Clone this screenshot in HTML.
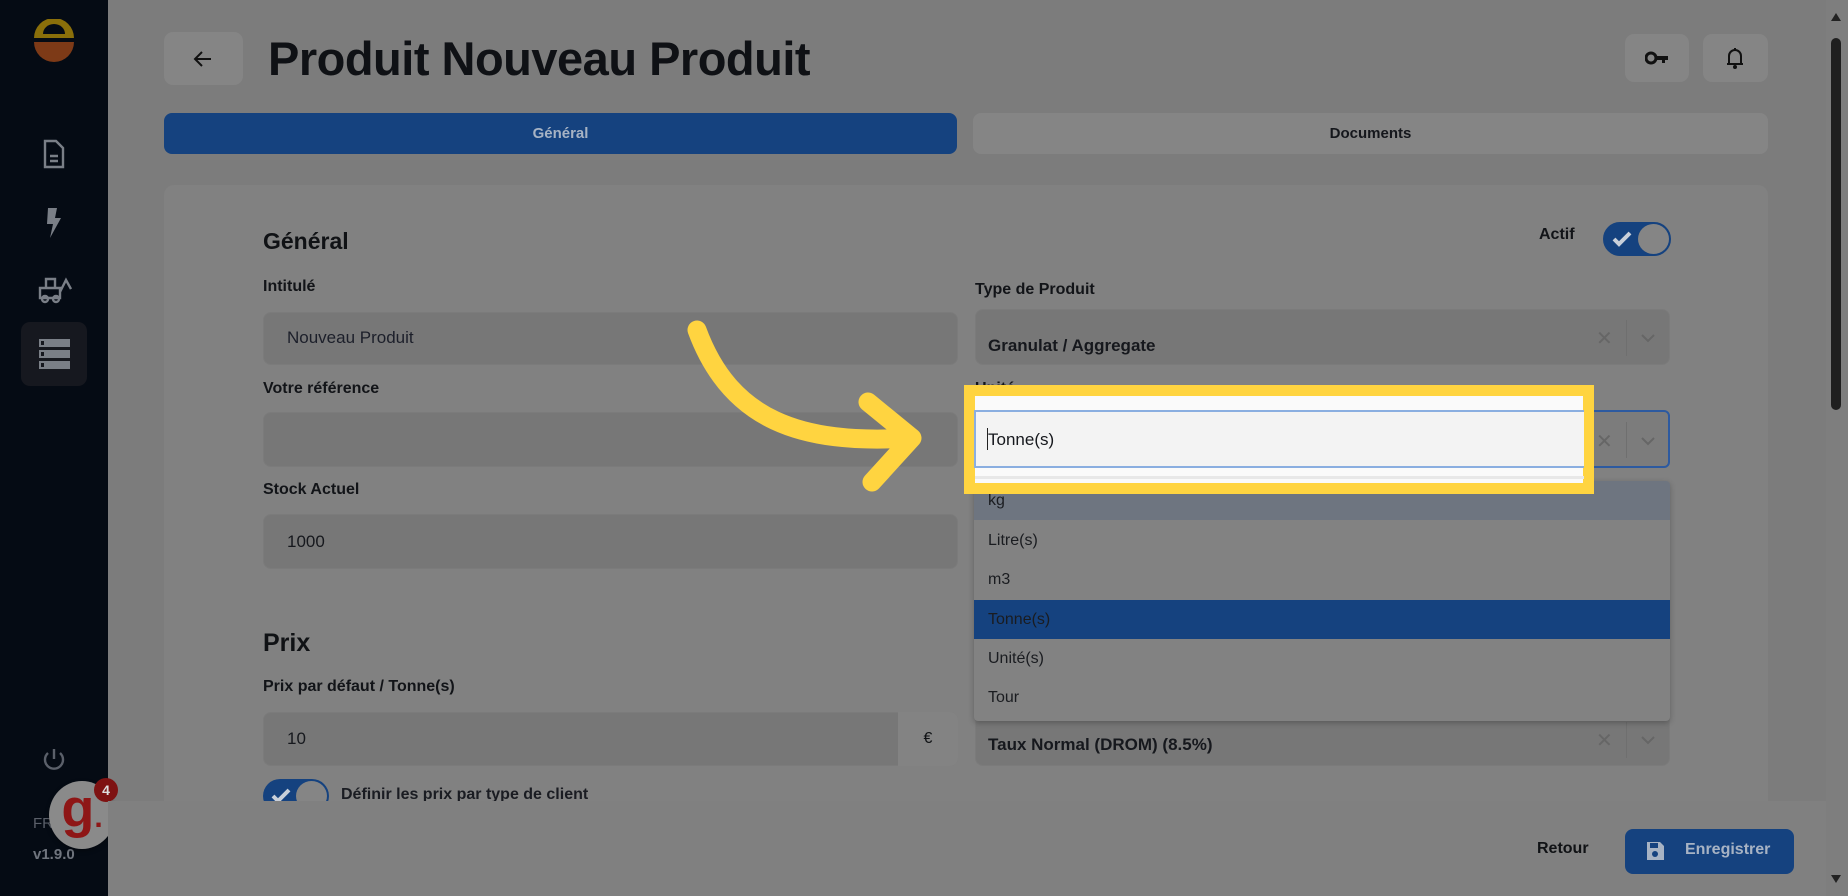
<!DOCTYPE html>
<html><head><meta charset="utf-8"><style>
*{box-sizing:border-box;margin:0;padding:0}
body{width:1848px;height:896px;overflow:hidden;background:#7c7c7c;font-family:"Liberation Sans",Arial,sans-serif;color:#101215;position:relative}
.abs{position:absolute}
.side{left:0;top:0;width:108px;height:896px;background:#050b14}
.btn{background:#858585;border-radius:9px}
.lbl{font-size:16px;font-weight:700;color:#121418}
.inp{background:#777;border:1px solid #7b7b7b;border-radius:8px}
.txt{font-size:17px;color:#16181d}
.item{position:absolute;left:0;width:696px;height:39px;font-size:16px;color:#1a1c20;padding-left:14px;line-height:39px}
</style></head><body>
<div class="abs side"></div>
<svg class="abs" style="left:31px;top:19px" width="46" height="46" viewBox="0 0 46 46"><path d="M3 19 A20 20 0 0 1 43 19 Z" fill="#8a6f0a"/><path d="M12 15 A11 10 0 0 1 34 15 Z" fill="#050b14"/><path d="M3 23 H43 A20 20 0 0 1 3 23 Z" fill="#7d3a17"/></svg>
<svg class="abs" style="left:42px;top:139px" width="24" height="30" viewBox="0 0 24 30" fill="none" stroke="#7a7f87" stroke-width="2.4"><path d="M3 2h11l7 7v19H3z"/><path d="M8 17h8M8 22h8"/></svg>
<svg class="abs" style="left:44px;top:208px" width="18" height="30" viewBox="0 0 18 30"><path d="M4 0h9l-2 10h6L6 30l3-14H3z" fill="#7a7f87"/></svg>
<svg class="abs" style="left:38px;top:276px" width="34" height="28" viewBox="0 0 34 28" fill="none" stroke="#7a7f87" stroke-width="2.4"><path d="M2 12h20v10H2zM8 12V3h9v9M22 16l6-12 5 9"/><circle cx="7" cy="23" r="3"/><circle cx="18" cy="23" r="3"/></svg>
<div class="abs" style="left:21px;top:322px;width:66px;height:64px;background:#16181f;border-radius:9px"></div>
<svg class="abs" style="left:39px;top:339px" width="31" height="30" viewBox="0 0 31 30" fill="#7a7f87"><rect x="0" y="0" width="31" height="8"/><rect x="0" y="11" width="31" height="8"/><rect x="0" y="22" width="31" height="8"/><rect x="2" y="2" width="3" height="4" fill="#16181f"/><rect x="2" y="13" width="3" height="4" fill="#16181f"/><rect x="2" y="24" width="3" height="4" fill="#16181f"/></svg>
<svg class="abs" style="left:42px;top:747px" width="24" height="26" viewBox="0 0 24 26" fill="none" stroke="#5b606a" stroke-width="2.4"><path d="M12 2v10"/><path d="M6 6A9 9 0 1 0 18 6"/></svg>
<div class="abs" style="left:33px;top:815px;font-size:15px;color:#5b606a">FR</div>
<div class="abs" style="left:33px;top:846px;font-size:15px;color:#70757e;font-weight:700">v1.9.0</div>
<div class="abs" style="left:49px;top:781px;width:66px;height:68px;border-radius:50%;background:#8a8a8a;box-shadow:0 2px 5px rgba(0,0,0,.3);text-align:center;font-size:54px;line-height:56px;color:#8e1616;font-weight:700">g<span style="font-size:30px">.</span></div>
<div class="abs" style="left:94px;top:778px;width:24px;height:24px;border-radius:50%;background:#7e1212;color:#ddd;font-size:14px;font-weight:700;text-align:center;line-height:24px">4</div>

<div class="abs btn" style="left:164px;top:32px;width:79px;height:53px"></div>
<svg class="abs" style="left:193px;top:49px" width="20" height="20" viewBox="0 0 20 20" fill="none" stroke="#111" stroke-width="2"><path d="M18 10H3M9 3l-7 7 7 7"/></svg>
<div class="abs" style="left:268px;top:31px;font-size:47px;font-weight:700;color:#0f1115;letter-spacing:-0.5px">Produit Nouveau Produit</div>
<div class="abs btn" style="left:1625px;top:34px;width:64px;height:48px"></div>
<svg class="abs" style="left:1645px;top:50px" width="24" height="16" viewBox="0 0 24 16"><circle cx="6" cy="8" r="5" fill="none" stroke="#111" stroke-width="3"/><path d="M11 6h12v4h-3v3h-3v-3h-6z" fill="#111"/></svg>
<div class="abs btn" style="left:1703px;top:34px;width:65px;height:48px"></div>
<svg class="abs" style="left:1725px;top:46px" width="20" height="24" viewBox="0 0 20 24" fill="none" stroke="#111" stroke-width="2"><path d="M4 18V10a6 6 0 0 1 12 0v8H4zM2 18h16M10 2v2"/><circle cx="10" cy="21" r="1" fill="#111"/></svg>

<div class="abs" style="left:164px;top:113px;width:793px;height:41px;background:#15427f;border-radius:8px;text-align:center;line-height:41px;font-size:15px;font-weight:700;color:#a7b3c4">Général</div>
<div class="abs" style="left:973px;top:113px;width:795px;height:41px;background:#858585;border-radius:8px;text-align:center;line-height:41px;font-size:15px;font-weight:700;color:#15171c">Documents</div>

<div class="abs" style="left:164px;top:185px;width:1604px;height:616px;background:#818181;border-radius:10px 10px 0 0"></div>
<div class="abs" style="left:263px;top:228px;font-size:23px;font-weight:700">Général</div>
<div class="abs lbl" style="left:1539px;top:226px">Actif</div>
<div class="abs" style="left:1603px;top:222px;width:68px;height:34px;border-radius:17px;background:#15427f;border:2px solid #15427f"></div>
<div class="abs" style="left:1638px;top:224px;width:31px;height:30px;border-radius:50%;background:#858585"></div>
<svg class="abs" style="left:1612px;top:230px" width="20" height="18" viewBox="0 0 20 18" fill="none" stroke="#c9d0da" stroke-width="4"><path d="M2 9l5 5 11-11"/></svg>

<div class="abs lbl" style="left:263px;top:278px">Intitulé</div>
<div class="abs inp" style="left:263px;top:312px;width:695px;height:53px"></div>
<div class="abs txt" style="left:287px;top:328px;color:#1c1f2a">Nouveau Produit</div>
<div class="abs lbl" style="left:975px;top:281px">Type de Produit</div>
<div class="abs inp" style="left:975px;top:309px;width:695px;height:56px"></div>
<div class="abs txt" style="left:988px;top:336px;font-weight:700">Granulat / Aggregate</div>
<div class="abs" style="left:1596px;top:326px;font-size:20px;color:#666">✕</div>
<div class="abs" style="left:1626px;top:320px;width:1px;height:36px;background:#6f6f6f"></div>
<svg class="abs" style="left:1640px;top:333px" width="16" height="10" viewBox="0 0 16 10" fill="none" stroke="#666" stroke-width="2"><path d="M2 2l6 6 6-6"/></svg>

<div class="abs lbl" style="left:263px;top:380px">Votre référence</div>
<div class="abs inp" style="left:263px;top:412px;width:695px;height:55px"></div>
<div class="abs lbl" style="left:975px;top:380px">Unité</div>
<div class="abs" style="left:975px;top:410px;width:695px;height:58px;background:#7c7c7c;border:2px solid #2d5aa0;border-radius:6px"></div>
<div class="abs" style="left:1596px;top:429px;font-size:20px;color:#666">✕</div>
<div class="abs" style="left:1626px;top:422px;width:1px;height:36px;background:#6f6f6f"></div>
<svg class="abs" style="left:1640px;top:436px" width="16" height="10" viewBox="0 0 16 10" fill="none" stroke="#666" stroke-width="2"><path d="M2 2l6 6 6-6"/></svg>

<div class="abs lbl" style="left:263px;top:481px">Stock Actuel</div>
<div class="abs inp" style="left:263px;top:514px;width:695px;height:55px"></div>
<div class="abs txt" style="left:287px;top:532px">1000</div>

<div class="abs" style="left:263px;top:629px;font-size:25px;font-weight:700">Prix</div>
<div class="abs lbl" style="left:263px;top:678px">Prix par défaut / Tonne(s)</div>
<div class="abs inp" style="left:263px;top:712px;width:695px;height:54px"></div>
<div class="abs" style="left:898px;top:712px;width:60px;height:54px;background:#838383;border-radius:0 8px 8px 0;text-align:center;line-height:54px;font-size:16px">€</div>
<div class="abs txt" style="left:287px;top:729px">10</div>
<div class="abs inp" style="left:975px;top:712px;width:695px;height:54px"></div>
<div class="abs txt" style="left:988px;top:735px;font-weight:700">Taux Normal (DROM) (8.5%)</div>
<div class="abs" style="left:1596px;top:728px;font-size:20px;color:#666">✕</div>
<div class="abs" style="left:1626px;top:722px;width:1px;height:36px;background:#6f6f6f"></div>
<svg class="abs" style="left:1640px;top:735px" width="16" height="10" viewBox="0 0 16 10" fill="none" stroke="#666" stroke-width="2"><path d="M2 2l6 6 6-6"/></svg>

<div class="abs" style="left:263px;top:779px;width:66px;height:34px;border-radius:17px;background:#15427f"></div>
<div class="abs" style="left:296px;top:781px;width:31px;height:30px;border-radius:50%;background:#858585"></div>
<svg class="abs" style="left:271px;top:787px" width="20" height="18" viewBox="0 0 20 18" fill="none" stroke="#c9d0da" stroke-width="4"><path d="M2 9l5 5 11-11"/></svg>
<div class="abs" style="left:341px;top:786px;font-size:16px;font-weight:700;color:#1a1c22">Définir les prix par type de client</div>
<div class="abs" style="left:108px;top:801px;width:1718px;height:95px;background:#808080"></div>

<div class="abs" style="left:974px;top:481px;width:696px;height:240px;background:#828282;border-radius:4px;box-shadow:0 2px 6px rgba(0,0,0,.25);overflow:hidden">
<div class="item" style="top:0;background:#6e7580">kg</div>
<div class="item" style="top:40px">Litre(s)</div>
<div class="item" style="top:79px">m3</div>
<div class="item" style="top:119px;background:#15427f">Tonne(s)</div>
<div class="item" style="top:158px">Unité(s)</div>
<div class="item" style="top:197px">Tour</div>
</div>

<div class="abs" style="left:964px;top:385px;width:630px;height:109px;border:11px solid #ffd440;background:#fafafa"></div>
<div class="abs" style="left:974px;top:410px;width:610px;height:58px;background:#f3f3f3;border-top:2px solid #8aaee0;border-bottom:2px solid #8aaee0;border-left:2px solid #8aaee0"></div>
<div class="abs" style="left:988px;top:430px;font-size:17px;color:#16181d">Tonne(s)</div>
<div class="abs" style="left:987px;top:428px;width:1px;height:22px;background:#222"></div>
<div class="abs" style="left:975px;top:476px;width:609px;height:3px;background:#e8e8e8"></div>

<svg class="abs" style="left:0;top:0" width="1848" height="896" viewBox="0 0 1848 896" fill="none" stroke="#ffd440" stroke-width="19" stroke-linecap="round" stroke-linejoin="round"><path d="M697 330 C730 420 800 445 910 438"/><path d="M868 402 L912 438 L872 482"/></svg>

<div class="abs" style="left:1537px;top:840px;font-size:16px;font-weight:700">Retour</div>
<div class="abs" style="left:1625px;top:829px;width:169px;height:45px;background:#15427f;border-radius:8px"></div>
<svg class="abs" style="left:1645px;top:840px" width="20" height="22" viewBox="0 0 20 22"><path d="M2 2h13l4 4v14H2z" fill="#a7b3c4"/><rect x="5" y="3" width="8" height="5" fill="#15427f"/><circle cx="10" cy="14" r="3" fill="#15427f"/></svg>
<div class="abs" style="left:1685px;top:841px;font-size:16px;font-weight:700;color:#a7b3c4">Enregistrer</div>

<div class="abs" style="left:1826px;top:0;width:22px;height:896px;background:#7e7e7e"></div>
<div class="abs" style="left:1831px;top:38px;width:10px;height:372px;background:#1f1f1f;border-radius:5px"></div>
<svg class="abs" style="left:1830px;top:12px" width="12" height="10"><path d="M6 1L11 9H1z" fill="#222"/></svg>
<svg class="abs" style="left:1830px;top:874px" width="12" height="10"><path d="M6 9L11 1H1z" fill="#222"/></svg>
</body></html>
